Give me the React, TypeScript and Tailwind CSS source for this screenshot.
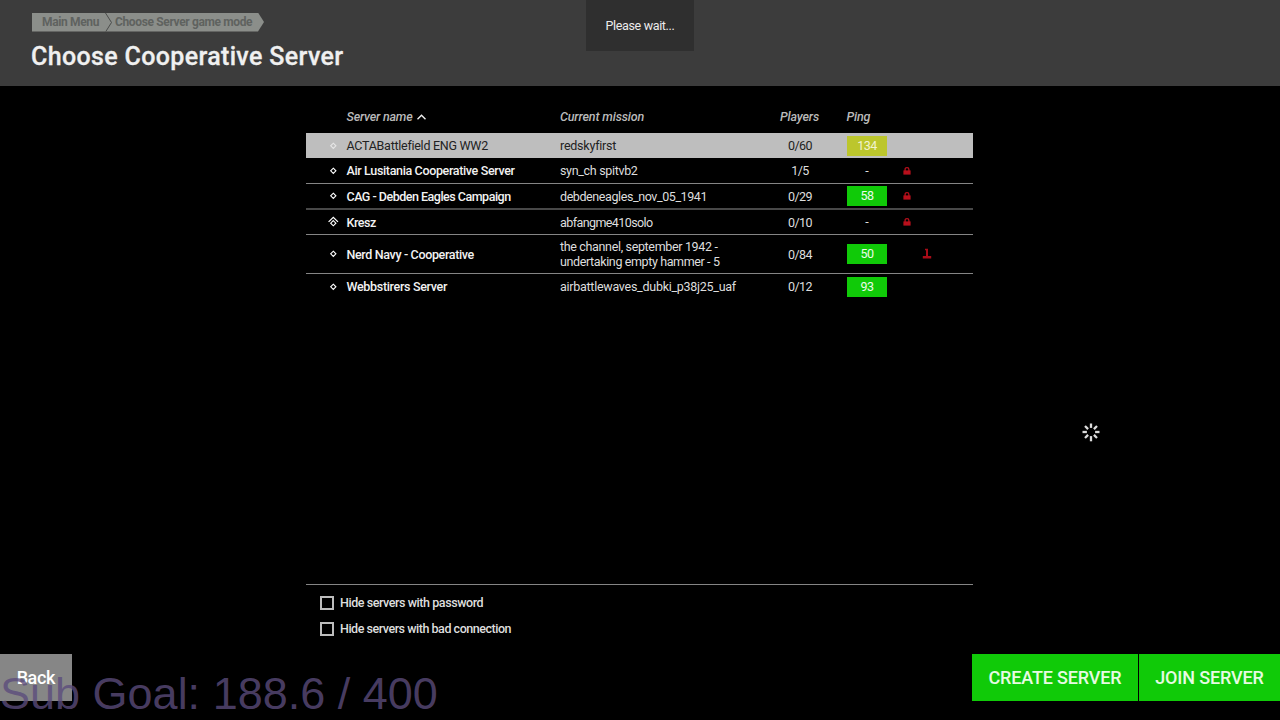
import type { ReactNode } from "react";
import clsx from "clsx";

type Server = {
  name: ReactNode;
  mission: ReactNode;
  players: string;
  ping?: string;
  nested?: boolean;
  locked?: boolean;
  restricted?: boolean;
  selected?: boolean;
  row: string;
};

const servers: Server[] = [
  {
    name: <span className="font-normal tracking-[-0.27px]">ACTABattlefield ENG WW2</span>,
    mission: <span className="tracking-[-0.24px]">redskyfirst</span>,
    players: "0/60",
    ping: "134",
    selected: true,
    row: "h-[25px] bg-[#bebebe] text-[#222]",
  },
  {
    name: <span className="tracking-[-0.35px]">Air Lusitania Cooperative Server</span>,
    mission: <span className="tracking-[-0.33px]">syn_ch spitvb2</span>,
    players: "1/5",
    locked: true,
    row: "h-[26px] border-b border-[#858585]",
  },
  {
    name: <span className="tracking-[-0.5px]">CAG - Debden Eagles Campaign</span>,
    mission: <span className="tracking-[-0.41px]">debdeneagles_nov_05_1941</span>,
    players: "0/29",
    ping: "58",
    locked: true,
    row: "h-[26px] border-b-2 border-[#484848]",
  },
  {
    name: <span className="tracking-[-0.43px]">Kresz</span>,
    mission: <span className="tracking-[-0.58px]">abfangme410solo</span>,
    players: "0/10",
    nested: true,
    locked: true,
    row: "h-[25px] border-b border-[#858585]",
  },
  {
    name: <span className="tracking-[-0.35px]">Nerd Navy - Cooperative</span>,
    mission: (
      <>
        <span className="block tracking-[-0.34px]">the channel, september 1942 -</span>
        <span className="block tracking-[-0.38px]">undertaking empty hammer - 5</span>
      </>
    ),
    players: "0/84",
    ping: "50",
    restricted: true,
    row: "h-[39px] border-b border-[#858585]",
  },
  {
    name: <span className="tracking-[-0.32px]">Webbstirers Server</span>,
    mission: <span className="tracking-[-0.27px]">airbattlewaves_dubki_p38j25_uaf</span>,
    players: "0/12",
    ping: "93",
    row: "h-[25px]",
  },
];

const columns = "grid grid-cols-[40px_214px_200px_80px_54px_26px_14px_39px] items-center";

function Diamond({ nested }: { nested?: boolean }) {
  return (
    <svg width="12" height="12" viewBox="0 0 12 12" fill="none" stroke="currentColor" strokeWidth="1.1" className="ml-[21px]">
      {nested ? (
        <>
          <path d="M6.3 4.6 8.9 7.2 6.3 9.8 3.7 7.2Z" />
          <path d="M1.6 5.9 6.3 1.4 11 5.9" strokeWidth="1.3" />
        </>
      ) : (
        <path d="M6.3 3.2 8.9 5.8 6.3 8.4 3.7 5.8Z" />
      )}
    </svg>
  );
}

function Lock() {
  return (
    <svg width="8" height="8" viewBox="0 0 8 8" className="mx-auto text-[#b80f1b]">
      <path d="M2.1 4V2.4C2.1 1.2 2.9.7 4 .7s1.9.5 1.9 1.7V4" fill="none" stroke="currentColor" strokeWidth="1.3" />
      <rect x="0.4" y="3.4" width="7.2" height="4.2" fill="currentColor" />
    </svg>
  );
}

function Stamp() {
  return (
    <svg width="10" height="12" viewBox="0 0 10 12" className="ml-[2px] text-[#a80c18]">
      <path d="M3 0.8h3v7.2h3.2v2.6H0.8V8h3.2V2.3H3z" fill="currentColor" />
    </svg>
  );
}

function Ping({ value, selected }: { value?: string; selected?: boolean }) {
  if (!value) return <span className="pt-px text-center">-</span>;
  return (
    <span
      className={clsx(
        "mx-auto flex h-5 w-10 items-center justify-center pt-px tracking-[-0.55px]",
        selected ? "bg-[#bcc62c] text-[#f2f3d0]" : "bg-[#10ca08] text-[#ecfbe8]",
      )}
    >
      {value}
    </span>
  );
}

function ServerRow({ server }: { server: Server }) {
  return (
    <div className={clsx(columns, server.row)}>
      <span className={server.selected ? "text-[#e6e6e6]" : "text-white"}>
        <Diamond nested={server.nested} />
      </span>
      <span className={clsx("whitespace-nowrap pl-[0.5px] pt-[1.5px] font-medium", !server.selected && "text-[#f2f2f2]")}>
        {server.name}
      </span>
      <span className="whitespace-nowrap pt-[1.5px]">{server.mission}</span>
      <span className="pt-[1.5px] text-center tracking-[-0.5px]">{server.players}</span>
      <Ping value={server.ping} selected={server.selected} />
      <span>{server.locked && <Lock />}</span>
      <span>{server.restricted && <Stamp />}</span>
    </div>
  );
}

function Option({ children }: { children: ReactNode }) {
  return (
    <label className="flex h-[25.5px] items-center gap-[6px] whitespace-nowrap">
      <span className="h-[14px] w-[14px] border-2 border-[#bdbdbd]" />
      {children}
    </label>
  );
}

function Spinner() {
  return (
    <svg width="20" height="20" viewBox="0 0 20 20" stroke="#dcdcdc" strokeWidth="2.3">
      {[0, 45, 90, 135, 180, 225, 270, 315].map((angle) => (
        <path key={angle} d={angle === 180 ? "M10 5.9V0.7" : "M10 5.9V1.5"} transform={`rotate(${angle} 10 10)`} />
      ))}
    </svg>
  );
}

export default function App() {
  return (
    <div className="relative flex h-[720px] w-[1280px] flex-col overflow-hidden bg-black font-['Roboto',sans-serif] text-[12.5px] leading-[14.5px] text-[#dedede]">
      <header className="h-[86px] bg-[#3c3c3c] pl-8 pt-[12.5px]">
        <nav className="flex h-[19px] w-[232px] items-center bg-[#8b8e8a] pl-[10px] text-[12px] font-bold text-[#5f625f] [clip-path:polygon(0_0,calc(100%-6px)_0,100%_50%,calc(100%-6px)_100%,0_100%)]">
          <span className="w-[63px] pt-px tracking-[-0.36px]">Main Menu</span>
          <svg width="8" height="19" viewBox="0 0 8 19" fill="none" stroke="#4b4d4b">
            <path d="M0.5 0 6.5 9.5 0.5 19" />
          </svg>
          <span className="ml-[2px] whitespace-nowrap pt-px tracking-[-0.36px]">Choose Server game mode</span>
        </nav>
        <h1 className="-ml-px mt-[10px] text-[25px] font-medium leading-[30px] tracking-[0.35px] text-[#f0f0f0] [-webkit-text-stroke:0.3px_#f0f0f0]">
          Choose Cooperative Server
        </h1>
      </header>

      <main className="flex h-[568px] pl-[306px]">
        <section className="flex w-[667px] flex-col pt-[15px]">
          <div className={clsx(columns, "h-8 font-medium italic text-[#bababa]")}>
            <span />
            <span className="flex items-center gap-[5px] pl-[0.5px] tracking-[-0.22px]">
              Server name
              <svg width="9" height="6" viewBox="0 0 9 6" fill="none" stroke="#f0f0f0" strokeWidth="1.4">
                <path d="M0.5 5.2 4.5 1.2l4 4" />
              </svg>
            </span>
            <span className="tracking-[-0.15px]">Current mission</span>
            <span className="pr-px text-center tracking-[-0.17px]">Players</span>
            <span className="pl-[6.5px] tracking-[-0.22px]">Ping</span>
          </div>
          {servers.map((server) => (
            <ServerRow key={server.players} server={server} />
          ))}
          <div className="mt-auto h-[70px] border-t border-[#858585] pl-[14px] pt-[5.5px] font-medium">
            <Option>
              <span className="tracking-[-0.43px]">Hide servers with password</span>
            </Option>
            <Option>
              <span className="tracking-[-0.47px]">Hide servers with bad connection</span>
            </Option>
          </div>
        </section>
        <aside className="flex w-[236px] justify-center pt-[336px]">
          <Spinner />
        </aside>
      </main>

      <footer className="flex h-[47px] text-[18px] font-medium">
        <button className="w-[71.5px] bg-[#868686] pt-[2px] tracking-[-0.4px] text-white">Back</button>
        <button className="ml-auto w-[166px] bg-[#10ca08] pt-[2px] tracking-[-0.15px] text-[#e6fbe2]">CREATE SERVER</button>
        <button className="ml-px w-[141px] bg-[#10ca08] pt-[2px] tracking-[-0.15px] text-[#e6fbe2]">JOIN SERVER</button>
      </footer>

      <div className="absolute left-[586px] top-0 flex h-[51px] w-[108px] items-center justify-center bg-[#2f2f2f] pt-[2px] tracking-[-0.34px] text-[#ececec]">
        Please wait...
      </div>
      <div className="absolute bottom-[4px] left-0 whitespace-nowrap font-['Liberation_Sans',sans-serif] text-[45px] leading-[45px] text-[#5b4c7c]/80">
        Sub Goal: 188.6 / 400
      </div>
    </div>
  );
}
